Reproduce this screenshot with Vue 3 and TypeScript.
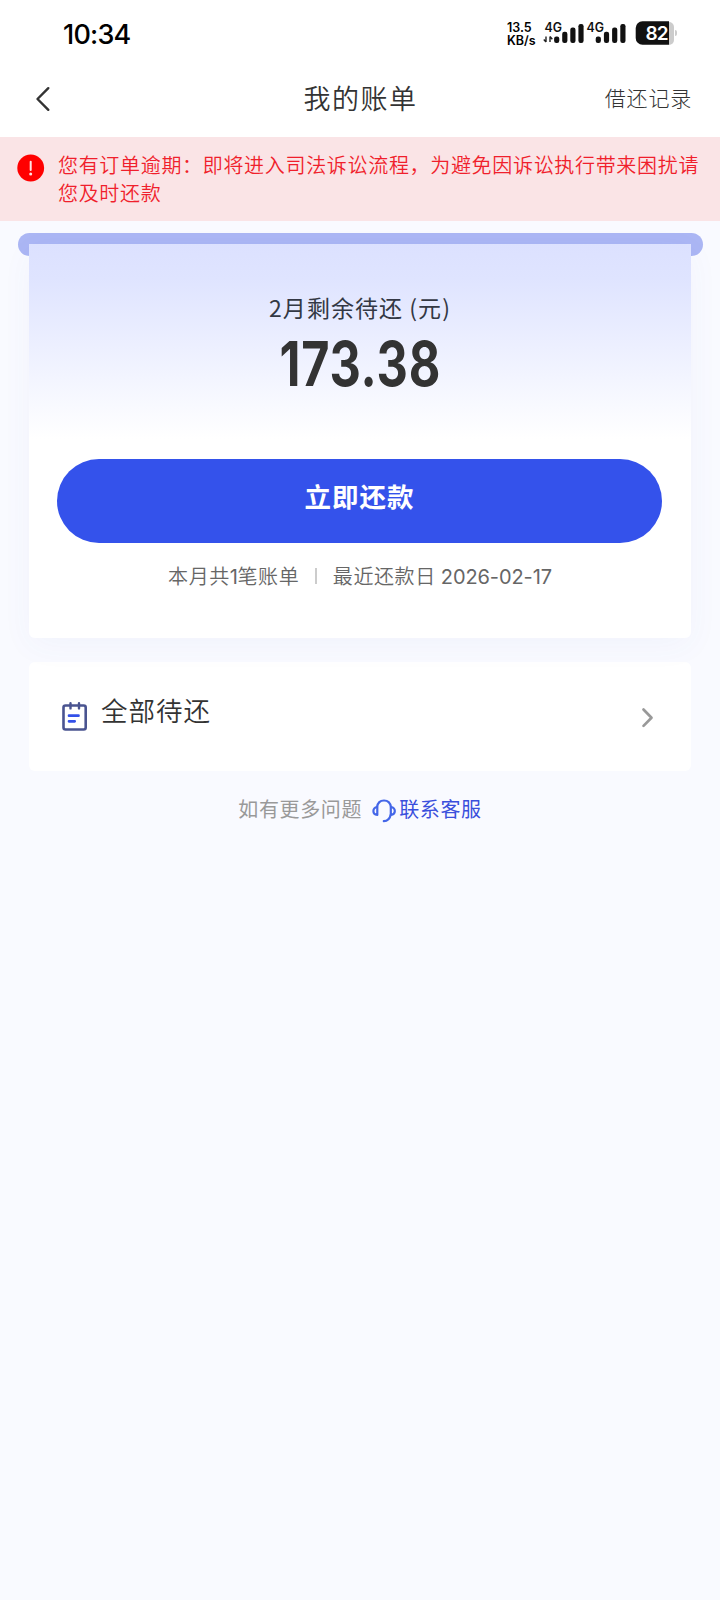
<script setup lang="ts">
const clock = '10:34'
const battery = 82
const bars = [6.5, 11.3, 15.5, 19]
const alertText = '您有订单逾期：即将进入司法诉讼流程，为避免因诉讼执行带来困扰请您及时还款'
const bill = { month: 2, amount: '173.38', count: 1, dueDate: '2026-02-17' }
</script>

<template>
  <div class="page">
    <header class="status">
      <span class="clock">{{ clock }}</span>
      <div class="indicators">
        <div class="speed"><span>13.5</span><span>KB/s</span></div>
        <svg class="signal" width="126" height="24" viewBox="0 0 126 24">
          <text x="1.500" y="11.300" textLength="17.500" lengthAdjust="spacingAndGlyphs">4G</text>
          <path d="M3 15.500v5.500M3 21l-2.200-2.500M7 21v-5.500M7 15.500l2.300 2.800" stroke="#222" stroke-width="1.400" fill="none" />
          <rect v-for="(h, i) in bars" :key="'a' + i" :x="11.100 + i * 8.100" :y="22 - h" width="5.200" :height="h" rx="2.200" />
          <text x="43.500" y="11.300" textLength="17.500" lengthAdjust="spacingAndGlyphs">4G</text>
          <rect v-for="(h, i) in bars" :key="'b' + i" :x="52.700 + i * 8.200" :y="22 - h" width="5.200" :height="h" rx="2.200" />
          <path d="M99.500 0.300h27v23.400h-27a6.800 6.800 0 0 1-6.800-6.800v-9.800a6.800 6.800 0 0 1 6.800-6.800z" />
        </svg>
        <div class="battery"><span>{{ battery }}</span></div>
      </div>
    </header>

    <nav class="nav">
      <svg class="back" width="18" height="28" viewBox="0 0 18 28"><path d="M14.300 3.200 3.500 14 14.300 24.800" fill="none" stroke="#333" stroke-width="2.400" stroke-linecap="round" stroke-linejoin="round" /></svg>
      <h1>我的账单</h1>
      <a class="records">借还记录</a>
    </nav>

    <section class="alert">
      <svg width="28" height="28" viewBox="0 0 28 28">
        <circle cx="13.700" cy="14" r="13.400" fill="#f00" />
        <path d="M13.700 7.800v8.200" stroke="#ffe4e4" stroke-width="2" stroke-linecap="round" />
        <circle cx="13.700" cy="20" r="1.500" fill="#ffe4e4" />
      </svg>
      <p>{{ alertText }}</p>
    </section>

    <main>
      <div class="slot" />
      <section class="bill">
        <p class="label">{{ bill.month }}月剩余待还 (元)</p>
        <p class="amount"><span>{{ bill.amount }}</span></p>
        <button class="pay">立即还款</button>
        <p class="summary">
          <span>本月共<b>{{ bill.count }}</b>笔账单</span>
          <i />
          <span>最近还款日 <b class="date">{{ bill.dueDate }}</b></span>
        </p>
      </section>

      <section class="all">
        <svg width="28" height="32" viewBox="0 0 28 32" fill="none" stroke-linecap="round">
          <rect x="2.500" y="5.500" width="22.200" height="24" rx="2" stroke="#4a5490" stroke-width="2.600" />
          <path d="M9.500 3.200v5.200M18 3.200v5.200" stroke="#4a5490" stroke-width="2.400" />
          <path d="M8 15.700h9.500M8 21.300h5.700" stroke="#3350e8" stroke-width="2.700" />
        </svg>
        <span>全部待还</span>
        <svg class="more" width="14" height="22" viewBox="0 0 14 22"><path d="M2.500 2.500 10.500 10.700 2.500 18.900" fill="none" stroke="#999" stroke-width="2.700" stroke-linecap="round" stroke-linejoin="round" /></svg>
      </section>

      <footer class="help">
        <span>如有更多问题</span>
        <svg width="24" height="24" viewBox="0 0 24 24" fill="none" stroke="#4466e8" stroke-width="2.200" stroke-linecap="round" stroke-linejoin="round">
          <path d="M5 8C5.700 3.800 8.500 1.500 12 1.500s6.300 2.300 7 6.500M18.600 16c-.8 4-3.200 6-6.800 6.200" />
          <path d="M5.300 8v8C2.800 15.700 1.400 14.200 1.400 12s1.400-3.600 3.900-4zM18.800 8c2.600.4 4 1.900 4 4s-1.400 3.600-4 4z" />
        </svg>
        <a>联系客服</a>
      </footer>
    </main>
  </div>
</template>

<style>
body { margin: 0; background: #f9faff; }
</style>

<style scoped>
* { box-sizing: border-box; }
p, h1 { margin: 0; font-weight: 400; }
.page { width: 720px; height: 1600px; overflow: hidden; background: #f9faff; font-family: "Noto Sans CJK SC", sans-serif; color: #333; }
.status { height: 64px; padding: 0 36px 0 63px; display: flex; justify-content: space-between; background: #fff; color: #000; }
.clock { margin-top: 19px; font: 500 27px/32px Inter, sans-serif; letter-spacing: -0.8px; }
.indicators { display: flex; align-items: flex-start; margin-top: 21px; }
.speed { width: 36px; display: flex; flex-direction: column; margin-top: 1px; font: 600 12.500px/12.500px Inter, sans-serif; }
.signal { display: block; fill: #111; }
.signal text { font: 600 12.500px Inter, sans-serif; }
.battery { position: relative; width: 15px; height: 24px; }
.battery::before { content: ""; position: absolute; left: 0; top: 0.500px; width: 5px; height: 23px; border-radius: 0 5px 5px 0; background: #ccc; }
.battery::after { content: ""; position: absolute; left: 6px; top: 9px; width: 2px; height: 6px; border-radius: 0 2px 2px 0; background: #ccc; }
.battery span { position: absolute; right: 16px; top: 1px; font: 600 19px/24px Inter, sans-serif; letter-spacing: -0.700px; color: #fff; }
.nav { height: 73px; display: grid; grid-template-columns: 200px 1fr 200px; align-items: start; background: #fff; }
.back { margin: 21px 0 0 34px; }
h1 { margin: 13.500px 0 0 1px; text-align: center; font-size: 27px; line-height: 40px; letter-spacing: 1.500px; font-weight: 350; }
.records { margin: 17px 28px 0 0; text-align: right; font-size: 21px; line-height: 32px; letter-spacing: 0.800px; font-weight: 300; }
.alert { height: 83.500px; padding: 14px 0 0 17px; display: flex; gap: 13px; background: #fae4e6; color: #f01f2c; }
.alert svg { flex: none; margin-top: 3px; }
.alert p { width: 644px; font-size: 20px; line-height: 27.500px; letter-spacing: 0.680px; font-weight: 350; word-break: break-all; }
main { padding: 12.500px 18px 0; }
.slot { height: 23px; margin: 0 -0.500px; border-radius: 12px; background: #abb6f4; }
.bill { position: relative; height: 393.500px; margin: -12px 11px 0; padding: 47px 28.500px 0; border-radius: 0 0 6px 6px; background: linear-gradient(#dce1ff 0, #dfe4ff 35px, #fff 195px); box-shadow: 0 8px 32px rgba(70, 90, 190, 0.045); text-align: center; }
.label { height: 32px; font-size: 23px; line-height: 32px; letter-spacing: 1.050px; color: #333844; }
.amount { height: 87px; padding-top: 1px; font: 700 61.500px/80px Inter, sans-serif; letter-spacing: 1px; }
.amount span { display: inline-block; transform: scaleX(0.79); }
.pay { display: block; width: 605px; height: 84.500px; margin: 48.500px 0 0 -0.500px; padding: 0 0 10px; border: 0; border-radius: 43px; background: #3452eb; color: #fff; font: 700 26.500px/40px "Noto Sans CJK SC", sans-serif; letter-spacing: 1px; }
.summary { margin-top: 16.500px; display: flex; justify-content: center; align-items: center; font-size: 20px; line-height: 32px; letter-spacing: 0.600px; font-weight: 350; color: #666; }
.summary i { width: 2px; height: 16px; margin: 0 16px 0 15.500px; background: #ccc; }
.summary b { font: 400 20px/20px Inter, sans-serif; letter-spacing: -0.5px; }
.summary .date { letter-spacing: -0.1px; }
.all { height: 109px; margin: 24px 11px 0; padding: 0 36px 0 32px; display: flex; align-items: flex-start; border-radius: 6px; background: #fff; }
.all svg { margin-top: 38.200px; }
.all span { margin: 28px 0 0 12px; font-size: 26.500px; line-height: 40px; letter-spacing: 1px; font-weight: 350; }
.all .more { margin: 45px 0 0 auto; }
.help { margin-top: 22px; display: flex; justify-content: center; align-items: flex-start; font-size: 20px; line-height: 32px; letter-spacing: 0.650px; color: #999; }
.help svg { margin: 6px 3px 0 10px; }
.help a { color: #3a4fdc; }
</style>
